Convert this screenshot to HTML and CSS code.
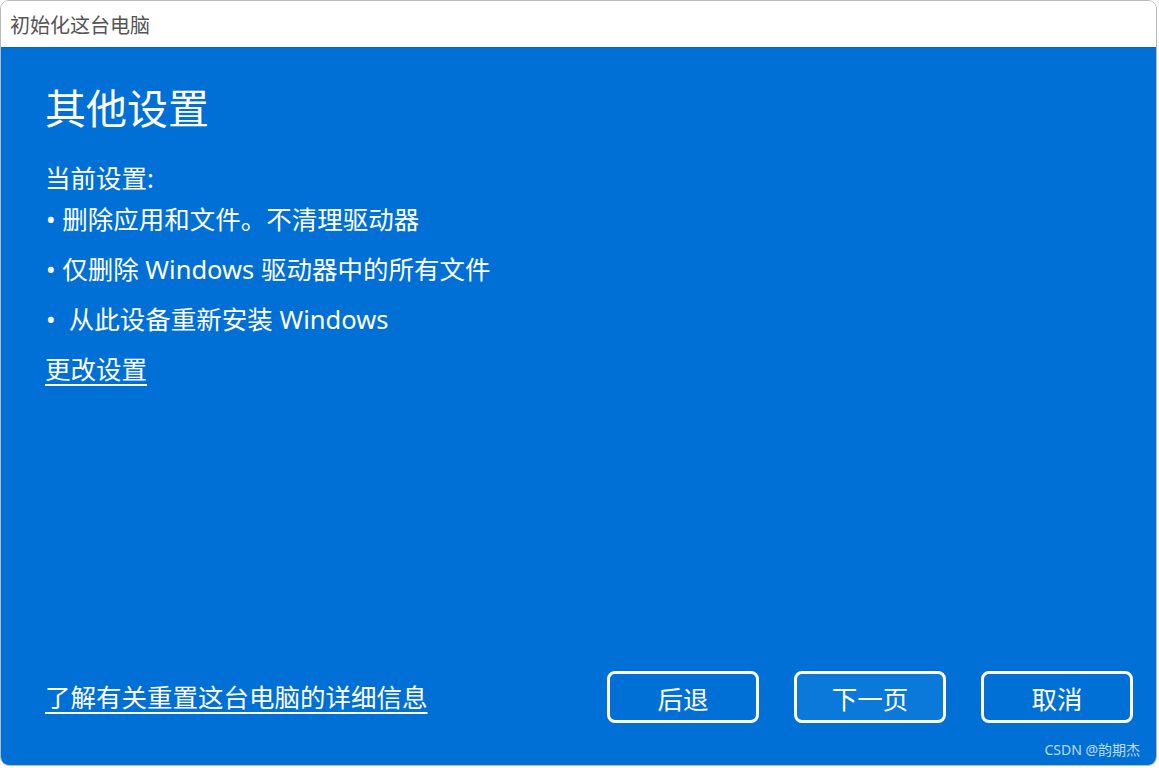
FILE: index.html
```html
<!DOCTYPE html>
<html lang="zh-CN">
<head>
    <meta charset="UTF-8">
    <meta name="viewport" content="width=device-width, initial-scale=1.0">
    <title>初始化这台电脑</title>
    <link rel="stylesheet" href="styles.css">
</head>
<body>

    <div class="window">
        <!-- Title bar -->
        <div class="title-bar">初始化这台电脑</div>

        <!-- Main panel -->
        <div class="panel">
            <div class="content">
                <h1>其他设置</h1>
                <p class="label">当前设置:</p>
                <ul class="settings">
                    <li>• 删除应用和文件。不清理驱动器</li>
                    <li>• 仅删除 Windows 驱动器中的所有文件</li>
                    <li>•&nbsp; 从此设备重新安装 Windows</li>
                </ul>
                <a class="link" href="#">更改设置</a>
            </div>

            <div class="footer">
                <a class="link" href="#">了解有关重置这台电脑的详细信息</a>
                <div class="buttons">
                    <button class="btn">后退</button>
                    <button class="btn primary">下一页</button>
                    <button class="btn">取消</button>
                </div>
            </div>

            <span class="watermark">CSDN @韵期杰</span>
        </div>
    </div>

</body>
</html>
```

FILE: styles.css
```css
/* Page */
body {
    margin: 0;
    background: #ffffff;
    font-family: "Noto Sans", "Noto Sans CJK SC", sans-serif;
}

.window {
    width: 1157px;
    height: 766px;
    box-sizing: border-box;
    border: 1px solid #b9b9b9;
    border-radius: 9px;
    overflow: hidden;
    display: flex;
    flex-direction: column;
}

.title-bar {
    height: 46px;
    padding-left: 9px;
    display: flex;
    align-items: center;
    font-size: 20px;
    color: #555555;
    background: #ffffff;
}

/* Blue panel */
.panel {
    position: relative;
    flex: 1;
    display: flex;
    flex-direction: column;
    justify-content: space-between;
    background: #0070d6;
    border-top: 1px solid #0a62c4;
    color: #ffffff;
    padding: 36px 23px 42px 44px;
}

.content {
    display: flex;
    flex-direction: column;
    align-items: flex-start;
}

h1 {
    margin: 0;
    font-size: 41px;
    font-weight: 400;
    line-height: 48px;
}

.label {
    margin: 30px 0 0;
    font-size: 25.5px;
    line-height: 32px;
}

.settings {
    list-style: none;
    margin: 0;
    padding: 0;
}
.settings li {
    font-size: 25.5px;
    line-height: 50px;
    margin-left: 1px;
}

.link {
    color: #ffffff;
    font-size: 25.5px;
    line-height: 50px;
    text-decoration: underline;
    text-underline-offset: 5px;
    text-decoration-thickness: 2px;
}

/* Footer */
.footer {
    display: flex;
    align-items: center;
    justify-content: space-between;
}

.buttons {
    display: flex;
    gap: 35px;
}

.btn {
    width: 152px;
    height: 52px;
    background: transparent;
    border: 3px solid #ffffff;
    border-radius: 8px;
    color: #ffffff;
    font-family: "Noto Sans", "Noto Sans CJK SC", sans-serif;
    font-size: 25.5px;
    cursor: pointer;
}
.btn.primary {
    background: #0b79da;
}

.watermark {
    position: absolute;
    right: 16px;
    bottom: 6px;
    font-size: 14px;
    color: rgba(255, 255, 255, 0.75);
}
```
